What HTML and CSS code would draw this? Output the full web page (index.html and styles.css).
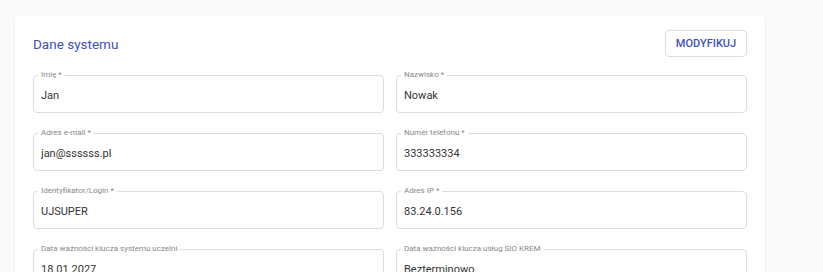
FILE: index.html
```html
<!DOCTYPE html>
<html>
<head>
  <title>Dane systemu</title>
  <link rel="stylesheet" href="styles.css">
</head>
<body>

<div class="card">
  <!-- Header -->
  <div class="card-header">
    <h2>Dane systemu</h2>
    <button class="btn-outline">MODYFIKUJ</button>
  </div>

  <!-- Form fields -->
  <div class="form-grid">
    <div class="field">
      <label>Imię *</label>
      <input type="text" value="Jan" readonly>
    </div>
    <div class="field">
      <label>Nazwisko *</label>
      <input type="text" value="Nowak" readonly>
    </div>
    <div class="field">
      <label>Adres e-mail *</label>
      <input type="text" value="jan@ssssss.pl" readonly>
    </div>
    <div class="field">
      <label>Numer telefonu *</label>
      <input type="text" value="333333334" readonly>
    </div>
    <div class="field">
      <label>Identyfikator/Login *</label>
      <input type="text" value="UJSUPER" readonly>
    </div>
    <div class="field">
      <label>Adres IP *</label>
      <input type="text" value="83.24.0.156" readonly>
    </div>
    <div class="field">
      <label>Data ważności klucza systemu uczelni</label>
      <input type="text" value="18.01.2027" readonly>
    </div>
    <div class="field">
      <label>Data ważności klucza usług SIO KREM</label>
      <input type="text" value="Bezterminowo" readonly>
    </div>
  </div>
</div>

</body>
</html>
```

FILE: styles.css
```css
body {
  font-family: Roboto, Arial, sans-serif;
  background-color: #FAFAFA;
  margin: 0;
  padding: 15px 58px 0 15px;
  color: #333;
}
.card {
  background-color: #FFF;
  border-radius: 4px;
  box-shadow: 0 1px 3px 0 rgba(0,0,0,0.08);
  padding: 15px 18px 30px 18px;
}
.card-header {
  display: flex;
  justify-content: space-between;
  align-items: center;
  height: 27px;
  margin-bottom: 18px;
}
h2 {
  margin: 0;
  font-size: 13.5px;
  font-weight: 400;
  color: #3F51B5;
}
.btn-outline {
  width: 82px;
  height: 27px;
  padding: 0;
  font-family: inherit;
  font-size: 11px;
  font-weight: 500;
  color: #3F51B5;
  background-color: #FFF;
  border: 1px solid #DDD;
  border-radius: 4px;
}
.form-grid {
  display: grid;
  grid-template-columns: 1fr 1fr;
  column-gap: 12px;
  row-gap: 20px;
}
.field {
  position: relative;
  height: 38px;
  border: 1px solid #DDD;
  border-radius: 4px;
  box-sizing: border-box;
  display: flex;
  align-items: center;
}
.field label {
  position: absolute;
  top: -6px;
  left: 4px;
  padding: 0 3px;
  background-color: #FFF;
  font-size: 8px;
  line-height: 10px;
  color: #888;
}
.field input {
  width: 100%;
  border: none;
  outline: none;
  background: transparent;
  padding: 3px 7px 0 7px;
  font-family: inherit;
  font-size: 11px;
  color: #333;
}
```
